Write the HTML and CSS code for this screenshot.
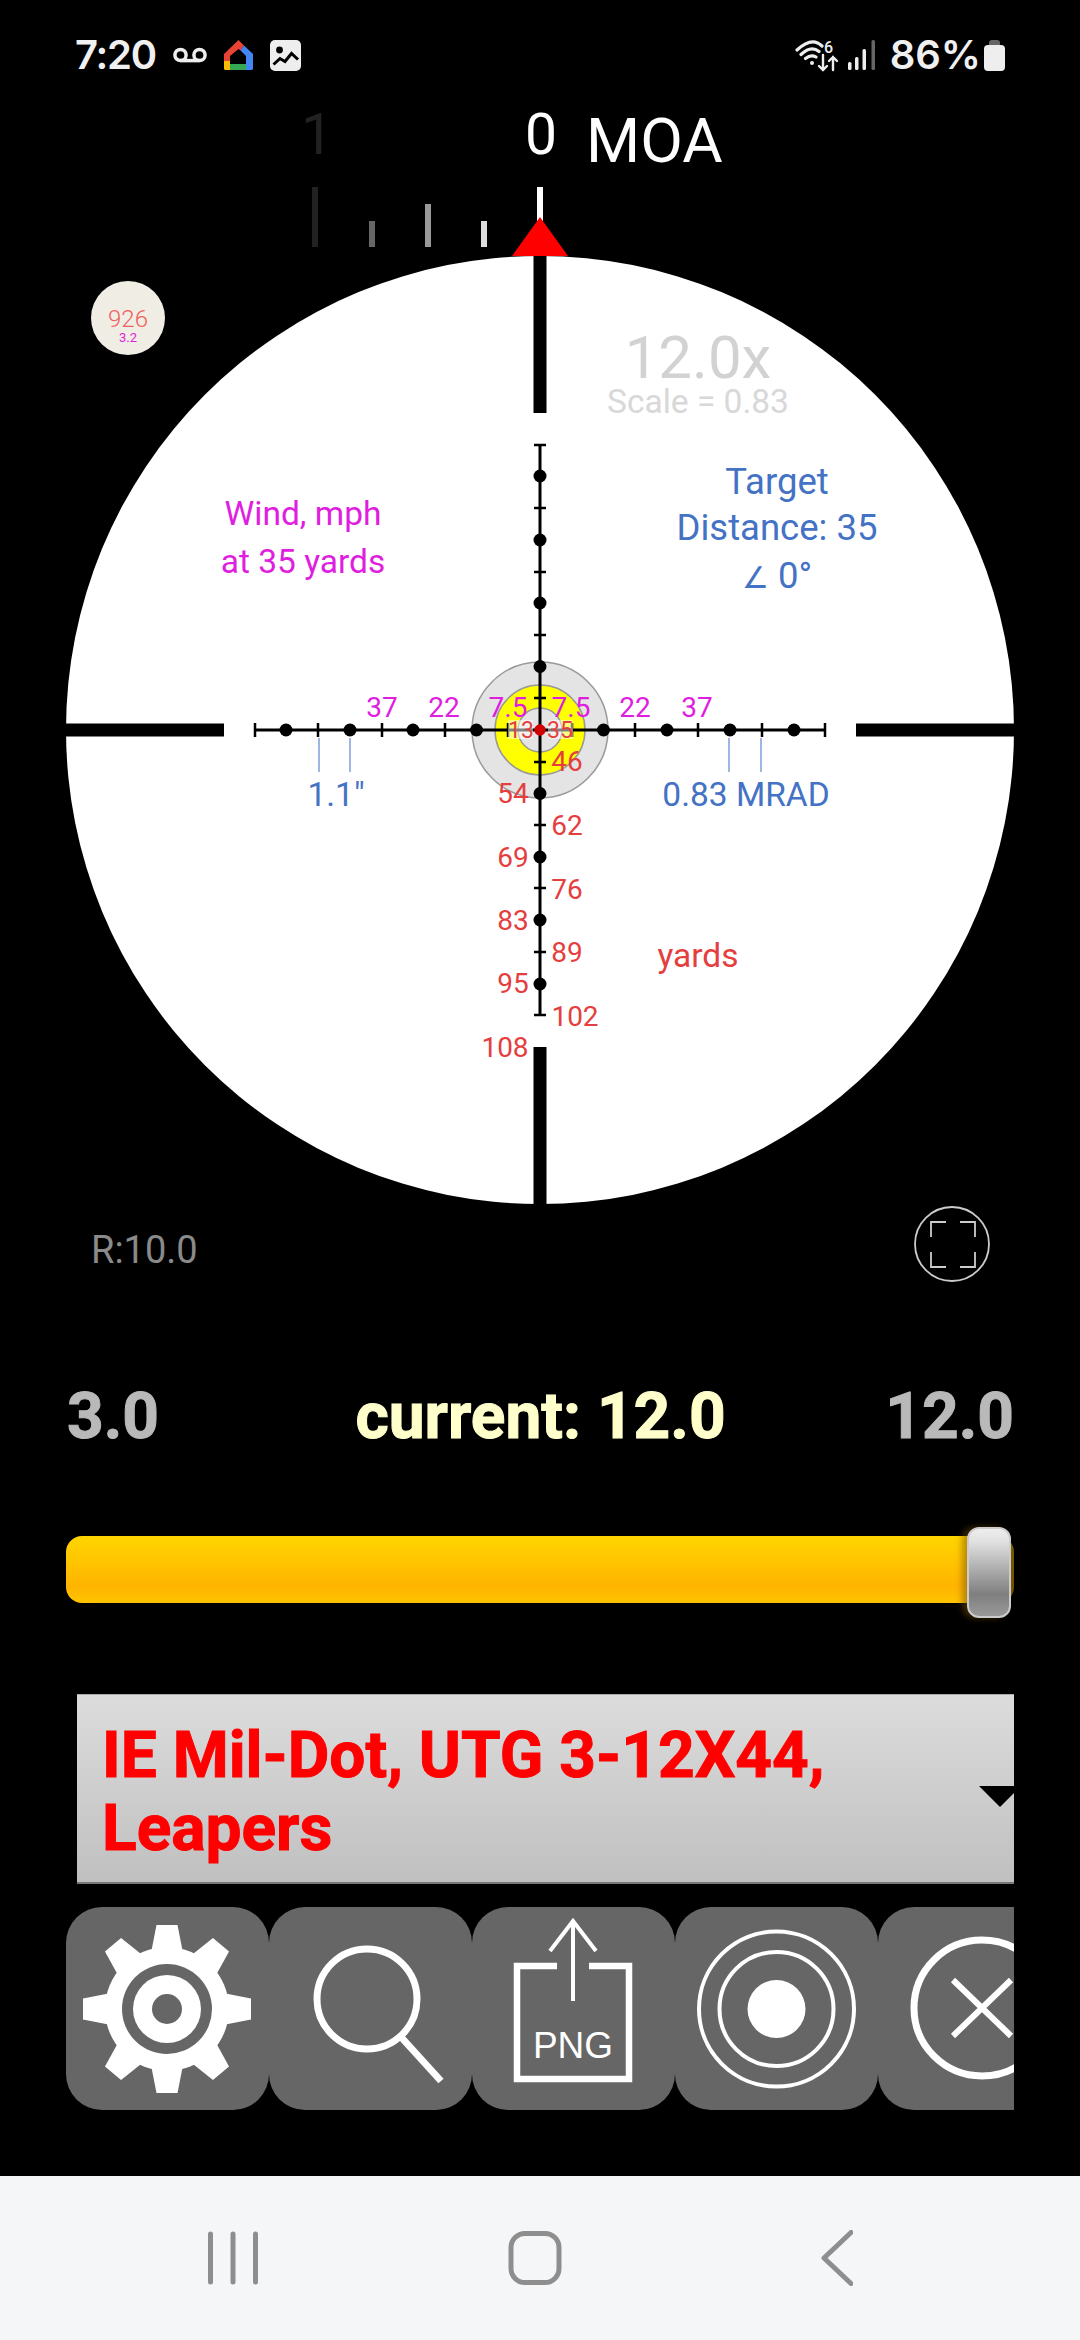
FILE: index.html
```html
<!DOCTYPE html>
<html>
<head>
<meta charset="utf-8">
<title>Reticle</title>
<link rel="stylesheet" href="styles.css">
</head>
<body>
<div class="screen">

<!-- status bar -->
<div class="status">
  <div class="status-group">
    <span class="clock">7:20</span>
    <svg class="ic-voicemail" width="34" height="16" viewBox="0 0 34 16"><circle cx="7.5" cy="8" r="5.6"/><circle cx="26.5" cy="8" r="5.6"/><path d="M7.5 13.6H26.5"/></svg>
    <svg width="29" height="31" viewBox="0 0 29 31">
      <polygon fill="#ea4335" points="14.5,0 20,5.5 16.5,10.5 14.5,9 6,16 6,21 0,21 0,14"/>
      <polygon fill="#4285f4" points="20,5.5 29,14 29,29 28,30 22,30 22,16 16.5,10.5"/>
      <polygon fill="#fbbc04" points="0,21 6,21 6,30 1,30 0,29"/>
      <rect fill="#34a853" x="6" y="24" width="16" height="6"/>
    </svg>
    <svg width="31" height="31" viewBox="0 0 31 31">
      <rect width="31" height="31" rx="5" fill="#eee"/>
      <circle cx="9.5" cy="10" r="3.4" fill="#000"/>
      <path d="M3.5 24.5L10 18.5L15 21.5L21.5 13.5L28 19.5" fill="none" stroke="#000" stroke-width="3"/>
    </svg>
  </div>
  <div class="status-group status-right">
    <svg class="ic-wifi" width="44" height="33" viewBox="0 0 44 33">
      <path d="M2 11Q17 -3 27 7M6 15.5Q16 6 24 12.5M10.5 19.5Q16 15 21 18"/>
      <circle class="solid" cx="17" cy="24" r="2"/>
      <path class="thin" d="M28 16V31M24 27L28 31L32 27M38 31V18M34 22L38 18L42 22"/>
      <text x="29" y="14" class="wifi-six">6</text>
    </svg>
    <svg class="ic-signal" width="27" height="30" viewBox="0 0 27 30">
      <rect x="0" y="22" width="3.5" height="8" rx="1.5" fill="#eee"/>
      <rect x="7" y="17" width="3.5" height="13" rx="1.5" fill="#eee"/>
      <rect x="14.5" y="9" width="3.5" height="21" rx="1.5" fill="#eee"/>
      <rect x="23.5" y="0" width="3.5" height="30" rx="1.5" fill="#666"/>
    </svg>
    <span class="battery-text">86%</span>
    <svg width="21" height="31" viewBox="0 0 21 31">
      <path d="M5 6V3Q5 0 8 0H13Q16 0 16 3V6Z" fill="#666"/>
      <rect y="5" width="21" height="26" rx="4" fill="#eee"/>
    </svg>
  </div>
</div>

<!-- windage ruler -->
<svg class="ruler" width="1080" height="160" viewBox="0 0 1080 160">
  <text class="ruler-num dim" x="317" y="58">1</text>
  <text class="ruler-num" x="541" y="58">0</text>
  <text class="ruler-unit" x="586" y="66">MOA</text>
  <rect x="312" y="91" width="6" height="60" fill="#222"/>
  <rect x="369" y="125" width="6" height="26" fill="#666"/>
  <rect x="425" y="108" width="6" height="43" fill="#999"/>
  <rect x="481" y="125" width="6" height="26" fill="#ddd"/>
  <rect x="537" y="91" width="6" height="40" fill="#fff"/>
  <polygon points="540,121 512,160 568,160" fill="#f00"/>
</svg>

<!-- scope -->
<div class="scope">
  <svg class="scope-view" width="948" height="948" viewBox="-474 -474 948 948">
    <circle r="474" fill="#fff"/>
    <rect x="-6.5" y="-474" width="13" height="157" fill="#000"/>
    <rect x="-6.5" y="317" width="13" height="157" fill="#000"/>
    <rect x="-474" y="-6.5" width="158" height="13" fill="#000"/>
    <rect x="316" y="-6.5" width="158" height="13" fill="#000"/>

    <circle class="ring" r="68" fill="#e4e4e4"/>
    <circle class="ring" r="45" fill="#ff0"/>
    <circle class="ring" r="22" fill="#e4e4e4"/>

    <path class="hair" d="M-285 0H285M0 -285V285"/>
    <path class="tick" d="M-285 -7V7M-222 -7V7M-158 -7V7M-95 -7V7M-32 -7V7M32 -7V7M95 -7V7M158 -7V7M222 -7V7M285 -7V7"/>
    <path class="tick" d="M-6 -285H6M-6 -222H6M-6 -158H6M-6 -95H6M-6 -32H6M-6 32H6M-6 95H6M-6 158H6M-6 222H6M-6 285H6"/>
    <g class="dots">
      <circle cx="-254" r="6.5"/><circle cx="-190" r="6.5"/><circle cx="-127" r="6.5"/><circle cx="-63.5" r="6.5"/>
      <circle cx="63.5" r="6.5"/><circle cx="127" r="6.5"/><circle cx="190" r="6.5"/><circle cx="254" r="6.5"/>
      <circle cy="-254" r="6.5"/><circle cy="-190" r="6.5"/><circle cy="-127" r="6.5"/><circle cy="-63.5" r="6.5"/>
      <circle cy="63.5" r="6.5"/><circle cy="127" r="6.5"/><circle cy="190" r="6.5"/><circle cy="254" r="6.5"/>
    </g>
    <circle r="5.7" fill="#d00000"/>

    <path class="measure" d="M-221 8V42M-190 8V42M189 8V42M221 8V42"/>

    <!-- wind marks -->
    <g class="mag small">
      <text x="-158" y="-13">37</text><text x="-96" y="-13">22</text><text x="-32" y="-13">7.5</text>
      <text x="31" y="-13">7.5</text><text x="95" y="-13">22</text><text x="157" y="-13">37</text>
    </g>

    <!-- range marks -->
    <rect class="halo" x="-32" y="-10" width="25" height="19"/>
    <rect class="halo" x="8" y="-10" width="25" height="19"/>
    <g class="red inner">
      <text x="-19" y="8">13</text><text x="20" y="8">35</text>
    </g>
    <g class="red small">
      <text x="27" y="41">46</text><text x="-27" y="73">54</text>
      <text x="27" y="105">62</text><text x="-27" y="137">69</text>
      <text x="27" y="169">76</text><text x="-27" y="200">83</text>
      <text x="27" y="232">89</text><text x="-27" y="263">95</text>
      <text x="35" y="296">102</text><text x="-35" y="327">108</text>
    </g>
    <text class="red label" x="158" y="237">yards</text>

    <text class="power" x="158" y="-352">12.0x</text>
    <text class="scale" x="158" y="-317">Scale = 0.83</text>

    <g class="blue target">
      <text x="237" y="-236">Target</text>
      <text x="237" y="-190">Distance: 35</text>
      <text x="237" y="-142"><tspan class="angle">∠</tspan> 0°</text>
    </g>
    <g class="blue label">
      <text x="-204" y="76">1.1"</text>
      <text x="206" y="76">0.83 MRAD</text>
    </g>
    <g class="mag label">
      <text x="-237" y="-205">Wind, mph</text>
      <text x="-237" y="-157">at 35 yards</text>
    </g>
  </svg>
  <div class="badge">
    <span class="badge-main">926</span>
    <span class="badge-sub">3.2</span>
  </div>
</div>

<div class="scope-foot">
  <span class="range">R:10.0</span>
  <svg class="expand" width="76" height="76" viewBox="0 0 76 76">
    <circle cx="38" cy="38" r="37"/>
    <path d="M32 16H17V31M46 16H61V31M61 46V61H46M32 61H17V46"/>
  </svg>
</div>

<!-- zoom -->
<div class="zoom-row">
  <span class="zoom-end">3.0</span>
  <span class="zoom-now">current: 12.0</span>
  <span class="zoom-end zoom-max">12.0</span>
</div>
<div class="slider">
  <div class="thumb"></div>
</div>

<div class="picker">
  <div class="picker-text">IE Mil-Dot, UTG 3-12X44,<br>Leapers</div>
  <div class="picker-arrow"></div>
</div>

<div class="tools">
  <div class="tool">
    <svg width="203" height="203" viewBox="0 0 203 203">
      <g transform="translate(101 102)" fill="#fff">
        <circle r="62"/>
        <path d="M-10.5 -84H10.5L16 -56H-16Z"/>
        <path transform="rotate(40)" d="M-10.5 -84H10.5L16 -56H-16Z"/>
        <path transform="rotate(90)" d="M-10.5 -84H10.5L16 -56H-16Z"/>
        <path transform="rotate(140)" d="M-10.5 -84H10.5L16 -56H-16Z"/>
        <path transform="rotate(180)" d="M-10.5 -84H10.5L16 -56H-16Z"/>
        <path transform="rotate(220)" d="M-10.5 -84H10.5L16 -56H-16Z"/>
        <path transform="rotate(270)" d="M-10.5 -84H10.5L16 -56H-16Z"/>
        <path transform="rotate(320)" d="M-10.5 -84H10.5L16 -56H-16Z"/>
        <circle r="45" fill="#666"/>
        <circle r="34"/>
        <circle r="15" fill="#666"/>
      </g>
    </svg>
  </div>
  <div class="tool">
    <svg class="line" width="203" height="203" viewBox="0 0 203 203">
      <circle cx="98" cy="92" r="50" stroke-width="7"/>
      <path d="M132 130L172 174" stroke-width="7"/>
    </svg>
  </div>
  <div class="tool">
    <svg class="line" width="203" height="203" viewBox="0 0 203 203">
      <path d="M85 59H45V172H157V59H117" stroke-width="6.5"/>
      <path d="M101 94V14" stroke-width="4"/>
      <path d="M78 44L101 14L124 44" stroke-width="4"/>
      <text class="png" x="101" y="151">PNG</text>
    </svg>
  </div>
  <div class="tool">
    <svg class="line" width="203" height="203" viewBox="0 0 203 203">
      <circle cx="101.5" cy="102" r="77.5" stroke-width="4"/>
      <circle cx="101.5" cy="102" r="57" stroke-width="4"/>
      <circle cx="101.5" cy="102" r="29" fill="#fff" stroke="none"/>
    </svg>
  </div>
  <div class="tool">
    <svg class="line" width="203" height="203" viewBox="0 0 203 203">
      <circle cx="104" cy="101" r="68" stroke-width="7"/>
      <path d="M75 73L133 129M133 73L75 129" stroke-width="6"/>
    </svg>
  </div>
</div>

<!-- navigation bar -->
<div class="navbar">
  <div class="nav-slot">
    <svg class="nav-ic" width="50" height="54" viewBox="0 0 50 54"><path d="M2.5 3V51M25 3V51M47.5 3V51"/></svg>
  </div>
  <div class="nav-slot">
    <svg class="nav-ic" width="54" height="54" viewBox="0 0 54 54"><rect x="3" y="2.5" width="48" height="49" rx="14"/></svg>
  </div>
  <div class="nav-slot">
    <svg class="nav-ic" width="32" height="56" viewBox="0 0 32 56"><path d="M30 2.5L3 28L30 53.5" class="chev"/></svg>
  </div>
</div>

</div>
</body>
</html>
```

FILE: styles.css
```css
html, body {
  margin: 0;
  padding: 0;
  background: #000;
}
.screen {
  width: 1080px;
  height: 2340px;
  display: flex;
  flex-direction: column;
  overflow: hidden;
  font-family: Roboto, "Liberation Sans", sans-serif;
}
svg {
  display: block;
}

/* status bar */
.status {
  height: 96px;
  flex: none;
  box-sizing: border-box;
  display: flex;
  align-items: center;
  justify-content: space-between;
  padding: 14px 75px 0 75px;
  color: #f0f0f0;
}
.status-group {
  display: flex;
  align-items: center;
  gap: 17px;
}
.clock, .battery-text {
  font-family: Inter, Roboto, sans-serif;
  font-size: 40px;
  font-weight: 600;
  line-height: 40px;
}
.clock {
  letter-spacing: -1.2px;
}
.battery-text {
  margin-right: -14px;
}
.ic-voicemail circle, .ic-voicemail path {
  fill: none;
  stroke: #eee;
  stroke-width: 3.5;
}
.ic-wifi {
  margin-right: -8px;
}
.ic-signal {
  margin-right: -2px;
}
.ic-wifi path {
  fill: none;
  stroke: #eee;
  stroke-width: 3.2;
  stroke-linecap: round;
}
.ic-wifi path.thin {
  stroke-width: 2.4;
}
.ic-wifi .solid {
  fill: #eee;
}
.wifi-six {
  fill: #eee;
  font-size: 16px;
  font-weight: 500;
}

/* ruler */
.ruler {
  flex: none;
}
.ruler-num {
  font-size: 57px;
  fill: #fff;
  text-anchor: middle;
}
.ruler-num.dim {
  fill: #222;
}
.ruler-unit {
  font-size: 62px;
  fill: #fff;
}

/* scope */
.scope {
  position: relative;
  flex: none;
  width: 948px;
  height: 948px;
  margin-left: 66px;
}
.ring {
  stroke: #999;
  stroke-width: 1.5;
}
.hair {
  fill: none;
  stroke: #000;
  stroke-width: 3;
}
.tick {
  fill: none;
  stroke: #000;
  stroke-width: 2.5;
}
.measure {
  fill: none;
  stroke: #7f9fd8;
  stroke-width: 1.5;
}
.halo {
  fill: #fff;
  opacity: .5;
}
.scope-view text {
  text-anchor: middle;
}
.small text {
  font-size: 28px;
}
.inner text {
  font-size: 23px;
}
.label, .label text {
  font-size: 33.5px;
}
.target text {
  font-size: 36.5px;
}
.angle {
  font-size: 30px;
}
.mag {
  fill: #e01ee0;
}
.red {
  fill: #e53e3e;
}
.blue {
  fill: #4472c4;
}
.power {
  font-size: 60px;
  fill: #d2d2d2;
}
.scale {
  font-size: 33.5px;
  fill: #d8d8d8;
}
.badge {
  position: absolute;
  left: 25px;
  top: 25px;
  width: 74px;
  height: 74px;
  border-radius: 50%;
  background: #f0ede4;
  display: flex;
  flex-direction: column;
  align-items: center;
  justify-content: center;
  padding-top: 14px;
  box-sizing: border-box;
}
.badge-main {
  font-size: 24px;
  font-weight: 300;
  line-height: 26px;
  color: #f0625e;
}
.badge-sub {
  font-size: 13px;
  line-height: 12px;
  color: #e01ee0;
}

.scope-foot {
  flex: none;
  height: 88px;
  padding: 2px 24px 0 25px;
  margin-left: 66px;
  width: 948px;
  box-sizing: border-box;
  display: flex;
  justify-content: space-between;
  align-items: flex-start;
}
.range {
  margin-top: 25px;
  font-size: 38px;
  line-height: 38px;
  color: #8a8a8a;
}
.expand {
  fill: none;
  stroke: #ccc;
  stroke-width: 1.8;
}

/* zoom */
.zoom-row {
  flex: none;
  display: grid;
  grid-template-columns: 1fr auto 1fr;
  margin: 93px 66px 0;
  padding: 0 0 0 1px;
  font-weight: bold;
  line-height: 64px;
  -webkit-text-stroke: 1px currentColor;
}
.zoom-end {
  font-size: 64px;
  color: #b9b9b9;
}
.zoom-max {
  text-align: right;
}
.zoom-now {
  font-size: 64px;
  color: #ffffcc;
}
.slider {
  position: relative;
  flex: none;
  height: 67px;
  margin: 87px 66px 0;
  border-radius: 16px;
  background: linear-gradient(#ffd500, #ffb400 75%, #ffc400);
}
.thumb {
  position: absolute;
  right: 3px;
  top: -9px;
  width: 44px;
  height: 91px;
  border-radius: 12px;
  box-sizing: border-box;
  border: 2px solid #ccc;
  background: linear-gradient(#eee, #e0e0e0 15%, #7f7f7f 75%, #999);
  box-shadow: -5px 0 6px rgba(120, 80, 0, .5), 3px 0 0 rgba(0, 0, 0, .55);
}

/* picker */
.picker {
  position: relative;
  flex: none;
  height: 190px;
  box-sizing: border-box;
  margin: 91px 66px 0 77px;
  padding: 24px 0 0 25px;
  border-top: 1px solid #aaa;
  border-bottom: 2px solid #777;
  overflow: hidden;
  background: linear-gradient(#dcdcdc, #c0c0c0);
}
.picker-text {
  font-weight: bold;
  font-size: 64px;
  line-height: 73px;
  color: #f00;
  white-space: nowrap;
  -webkit-text-stroke: 1px #f00;
}
.picker-arrow {
  position: absolute;
  left: 902px;
  top: 91px;
  width: 0;
  height: 0;
  border-left: 21px solid transparent;
  border-right: 21px solid transparent;
  border-top: 21px solid #000;
}

/* tool buttons */
.tools {
  flex: none;
  display: flex;
  margin: 23px 66px 0;
  overflow: hidden;
}
.tool {
  flex: none;
  width: 203px;
  height: 203px;
  border-radius: 36px;
  background: #666;
}
.line {
  fill: none;
  stroke: #fff;
}
.png {
  fill: #fff;
  stroke: none;
  font-family: "Liberation Sans", sans-serif;
  font-size: 37px;
  text-anchor: middle;
}

/* navigation bar */
.navbar {
  margin-top: auto;
  height: 164px;
  flex: none;
  box-sizing: border-box;
  padding-right: 10px;
  display: flex;
  justify-content: center;
  align-items: center;
  background: #f5f6f8;
}
.nav-slot {
  width: 302px;
  display: flex;
  justify-content: center;
}
.nav-ic {
  fill: none;
  stroke: #8e8e8e;
  stroke-width: 5;
  stroke-linecap: round;
  stroke-linejoin: round;
}
```
